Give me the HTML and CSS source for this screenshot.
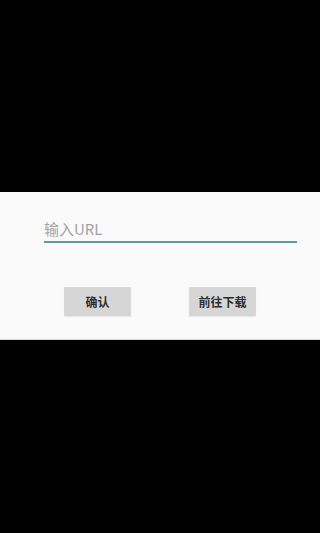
FILE: index.html
```html
<!DOCTYPE html>
<html lang="zh-CN">
<head>
<meta charset="utf-8">
<meta name="viewport" content="width=device-width, initial-scale=1">
<link rel="stylesheet" href="styles.css">
<title>输入URL</title>
</head>
<body>
<div class="screen">
  <div class="dialog">
    <div class="field">
      <span class="placeholder">输入URL</span>
    </div>
    <div class="actions">
      <button class="btn">确认</button>
      <button class="btn">前往下载</button>
    </div>
  </div>
</div>
</body>
</html>
```
FILE: styles.css
```css
html, body {
  margin: 0;
  padding: 0;
  background: #000;
}
.screen {
  width: 320px;
  height: 533px;
  display: flex;
  flex-direction: column;
  padding-top: 192px;
  box-sizing: border-box;
  font-family: "Noto Sans CJK SC", "Noto Sans", sans-serif;
}
.dialog {
  height: 148px;
  background: #fafafa;
  box-sizing: border-box;
  padding: 0 23px 0 44px;
  display: flex;
  flex-direction: column;
  box-shadow: inset 0 -2px 1px -1px #d8d8d8;
}
.field {
  margin-top: 20px;
  height: 31px;
  border-bottom: 2px solid #5e9e9a;
  display: flex;
  align-items: flex-end;
  padding-bottom: 1px;
  box-sizing: border-box;
}
.placeholder {
  font-size: 15px;
  line-height: 22px;
  color: #a3a3a3;
}
.actions {
  margin-top: 44px;
  padding-left: 20px;
  display: flex;
  gap: 58px;
}
.btn {
  width: 67px;
  height: 29px;
  padding: 0;
  border: none;
  border-radius: 1px;
  background: #d6d6d6;
  color: #2e2e2e;
  font-family: "Noto Sans CJK SC", "Noto Sans", sans-serif;
  font-size: 12px;
  font-weight: bold;
  line-height: 29px;
  box-shadow: 0 1px 1px rgba(0,0,0,0.08);
}
```
